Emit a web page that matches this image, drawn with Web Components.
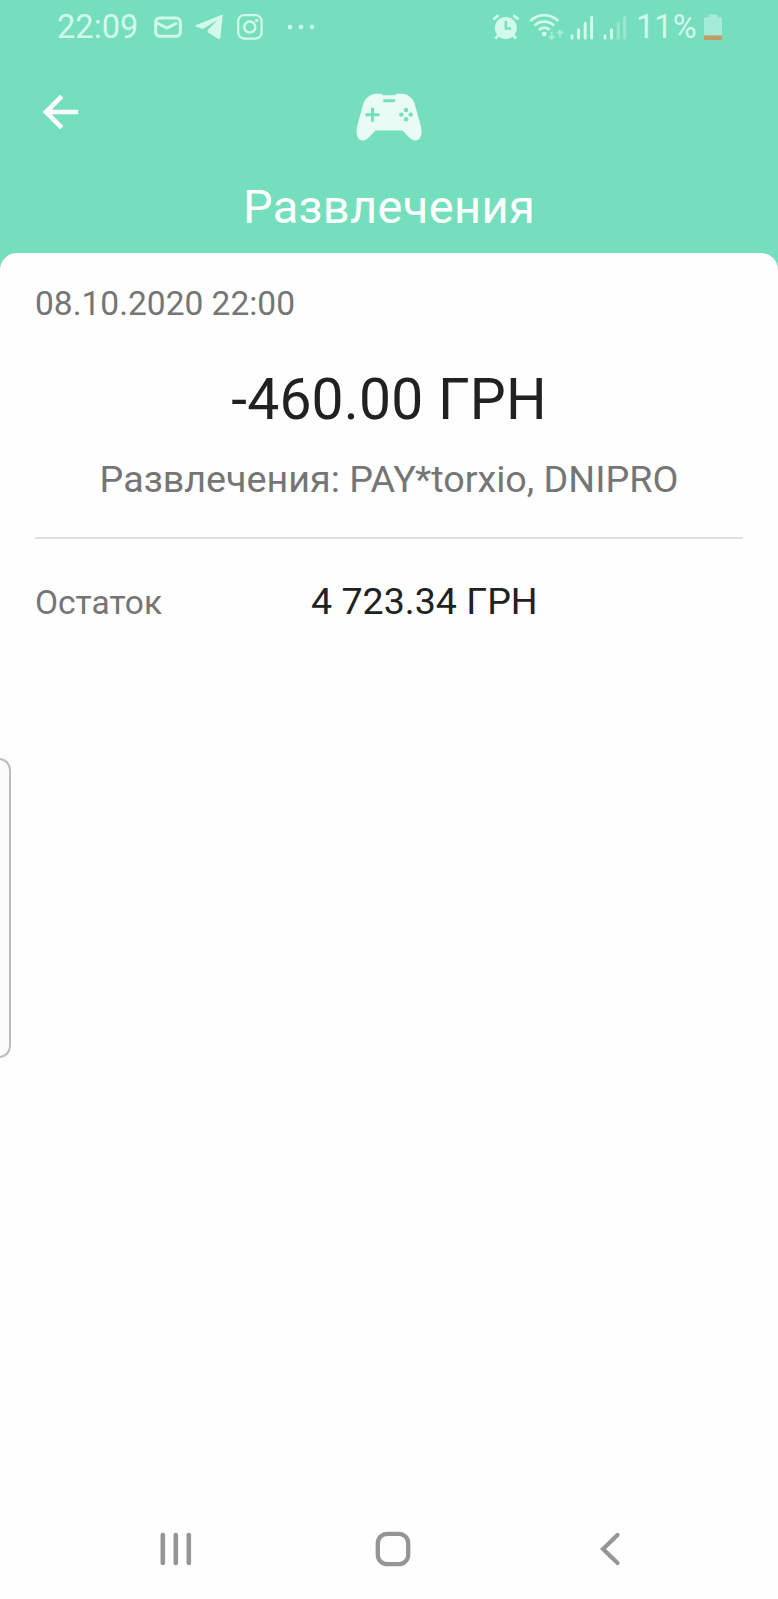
<!DOCTYPE html>
<html lang="ru">
<head>
<meta charset="utf-8">
<title>Развлечения</title>
<style>
  html, body {
    margin: 0;
    height: 100%;
  }

  body {
    font-family: Roboto, "Noto Sans", sans-serif;
    background: #fefefe;
    overflow: hidden;
  }
</style>
</head>
<body>
<app-screen>
  <status-bar slot="top" time="22:09" battery="11%"></status-bar>
  <category-header slot="top">Развлечения</category-header>
  <transaction-card>
    <span slot="date">08.10.2020 22:00</span>
    <span slot="amount">-460.00 ГРН</span>
    <span slot="details">Развлечения: PAY*torxio, DNIPRO</span>
    <detail-row label="Остаток">4 723.34 ГРН</detail-row>
  </transaction-card>
  <edge-handle slot="overlay"></edge-handle>
  <nav-bar slot="bottom"></nav-bar>
</app-screen>

<script>
// Icon table: [viewBox, markup]
const ICONS = {
  mail: ["0 0 28 26", `
    <rect x="1.7" y="3.9" width="24.6" height="18.4" rx="4" fill="none" stroke="currentColor" stroke-width="3"/>
    <path d="M2 8.5 L13 14 L23 9" fill="none" stroke="currentColor" stroke-width="3"/>`],
  telegram: ["0 0 28 26", `
    <path d="M27.7 1.2 Q28 .5 27 .8 L1.2 11 Q-.3 12 1.3 12.8 L8 14.9 L22.5 6 L12.5 16.2 L13 18.6 L23.3 25 Q25 25.7 25.4 23.8Z" fill="currentColor"/>`],
  instagram: ["0 0 26 26", `
    <rect x="1.2" y="1.2" width="23.4" height="23.4" rx="6" fill="none" stroke="currentColor" stroke-width="2.2"/>
    <circle cx="12.8" cy="13" r="5.6" fill="none" stroke="currentColor" stroke-width="2.5"/>
    <circle cx="19.8" cy="6.4" r="1.7" fill="currentColor"/>`],
  dots: ["0 0 28 26", `
    <g fill="currentColor"><circle cx="3" cy="13" r="2.3"/><circle cx="14" cy="13" r="2.3"/><circle cx="25" cy="13" r="2.3"/></g>`],
  alarm: ["0 0 28 26", `
    <circle cx="13.8" cy="14" r="11" fill="currentColor"/>
    <path d="M1.3 5.5 L6.3 1.2 M26.5 5.5 L21.5 1.2 M6.5 21 L3.5 24.7 M21 21 L24 24.7" stroke="currentColor" stroke-width="2.7"/>
    <path d="M13.8 7 V14.5 H19" fill="none" stroke="#75dfbd" stroke-width="2.4"/>`],
  wifi: ["0 0 36 26", `
    <g fill="none" stroke="currentColor" stroke-width="2.6">
      <path d="M1.2 7.2 C8.5 -.8 22 -.8 29.3 7.2"/>
      <path d="M5.5 11.6 C10.5 6.3 20 6.3 25 11.6"/>
      <path d="M9.8 16 C12.8 12.8 17.7 12.8 20.7 16"/>
    </g>
    <circle cx="15.2" cy="20" r="2.4" fill="currentColor"/>
    <path d="M22.8 17.5 V25 M19.9 22 L22.8 25 L25.7 22 M31 23.5 V16.5 M28.1 19.5 L31 16.5 L33.9 19.5" fill="none" stroke="currentColor" stroke-width="1.9" opacity=".5"/>`],
  signal: ["0 0 24 26", `
    <path d="M2 21.8 V24 M8.5 15.7 V24 M15.2 9.3 V24 M21.6 3.3 V24" stroke="currentColor" stroke-width="3" stroke-linecap="round"/>`],
  signalWeak: ["0 0 24 26", `
    <g stroke="currentColor" stroke-width="3" stroke-linecap="round">
      <path d="M2 21.8 V24 M8.5 15.7 V24"/>
      <path d="M15.2 9.3 V24 M21.6 3.3 V24" opacity=".4"/>
    </g>`],
  battery: ["0 0 18 26", `
    <path d="M0 4.5 Q0 3.3 1.2 3.3 H4.5 V2 Q4.5 .5 6 .5 H12 Q13.5 .5 13.5 2 V3.3 H16.8 Q18 3.3 18 4.5 V21.5 H0Z" fill="#a5ecd6"/>
    <path d="M0 21.5 H18 V24.6 Q18 26 16.6 26 H1.4 Q0 26 0 24.6Z" fill="#c49a6c"/>`],
  back: ["0 0 36 36", `
    <path d="M35 18 H4 M18.7 2.3 L3 18 L18.7 33.7" fill="none" stroke="currentColor" stroke-width="4.6"/>`],
  gamepad: ["0 0 66 48", `
    <path d="M14 2.6 Q16.5 .8 20 .8 H24 Q26 .8 27 2.2 H39 Q40 .8 42 .8 H46 Q50 .8 52 2.6 L55 4.8 Q57.5 7 58.6 10.5 L64.8 33 Q66.5 41 64 45 Q62.3 47.6 58.8 47.5 Q56 47.4 54 45.3 L46.5 37.5 H19.5 L12 45.3 Q10 47.4 7.2 47.5 Q3.7 47.6 2 45 Q-.5 41 1.2 33 L7.4 10.5 Q8.5 7 11 4.8Z" fill="currentColor"/>
    <path d="M9.5 21.8 H23.5 M16.5 14.8 V28.8 M27.3 7.8 H39" fill="none" stroke="#75dfbd" stroke-width="3"/>
    <g fill="#75dfbd"><circle cx="50" cy="17" r="2.2"/><circle cx="50" cy="26.2" r="2.2"/><circle cx="45.3" cy="21.6" r="2.2"/><circle cx="54.7" cy="21.6" r="2.2"/></g>`],
  recents: ["0 0 36 36", `
    <path d="M4.8 4 V32 M17.8 4 V32 M30.8 4 V32" stroke="currentColor" stroke-width="4.6" stroke-linecap="round"/>`],
  home: ["0 0 36 36", `
    <rect x="2.8" y="2.8" width="30.4" height="30.4" rx="9.5" fill="none" stroke="currentColor" stroke-width="4.3"/>`],
  chevron: ["0 0 36 36", `
    <path d="M24.5 4 L10 18 L24.5 32" fill="none" stroke="currentColor" stroke-width="4.2" stroke-linecap="round"/>`]
};

// <ui-icon name="mail"></ui-icon>, sized from the icon's viewBox
class UiIcon extends HTMLElement {
  connectedCallback() {
    const [box, markup] = ICONS[this.getAttribute("name")];
    const [, , width, height] = box.split(" ");
    const root = this.shadowRoot || this.attachShadow({ mode: "open" });
    root.innerHTML = `
      <style>
        :host { display: block; flex: none; }
        svg { display: block; }
      </style>
      <svg width="${width}" height="${height}" viewBox="${box}">${markup}</svg>
    `;
  }
}

class AppScreen extends HTMLElement {
  constructor() {
    super();
    this.attachShadow({ mode: "open" }).innerHTML = `
      <style>
        :host {
          display: flex;
          flex-direction: column;
          position: relative;
          height: 1599px;
          overflow: hidden;
        }

        .top {
          background: #75dfbd;
          padding-bottom: 20px;
          margin-bottom: -20px;
        }

        main {
          flex: 1;
          display: flex;
          flex-direction: column;
        }
      </style>
      <div class="top"><slot name="top"></slot></div>
      <main><slot></slot></main>
      <slot name="bottom"></slot>
      <slot name="overlay"></slot>
    `;
  }
}

class StatusBar extends HTMLElement {
  connectedCallback() {
    const root = this.shadowRoot || this.attachShadow({ mode: "open" });
    root.innerHTML = `
      <style>
        :host {
          display: flex;
          justify-content: space-between;
          height: 54px;
          padding: 0 56px 0 57px;
          color: #d3f8ec;
          font-size: 32.7px;
          line-height: 55px;
        }

        .group { display: flex; align-items: center; }
        .notices { gap: 13.5px; }
        .time { width: 83px; }
        .dots { margin-left: 11px; }
        .system { gap: 9px; }
        .battery { width: 60px; margin: 0 -1px 0 0; }
      </style>
      <div class="group notices">
        <span class="time">${this.getAttribute("time")}</span>
        <ui-icon name="mail"></ui-icon>
        <ui-icon name="telegram"></ui-icon>
        <ui-icon name="instagram"></ui-icon>
        <ui-icon class="dots" name="dots"></ui-icon>
      </div>
      <div class="group system">
        <ui-icon name="alarm"></ui-icon>
        <ui-icon name="wifi" style="margin-right: -4px"></ui-icon>
        <ui-icon name="signal"></ui-icon>
        <ui-icon name="signalWeak"></ui-icon>
        <span class="battery">${this.getAttribute("battery")}</span>
        <ui-icon name="battery"></ui-icon>
      </div>
    `;
  }
}

class CategoryHeader extends HTMLElement {
  constructor() {
    super();
    this.attachShadow({ mode: "open" }).innerHTML = `
      <style>
        :host {
          display: block;
          height: 199px;
          box-sizing: border-box;
          padding: 38px 43px 0;
          color: #fff;
        }

        .tools {
          display: grid;
          grid-template-columns: 1fr auto 1fr;
          align-items: start;
          height: 84px;
        }

        .back { margin-top: 2px; }
        .pad { margin-top: 0.7px; color: #e9fbf5; }

        h1 {
          margin: 0;
          font-size: 47px;
          font-weight: 400;
          line-height: 62px;
          letter-spacing: 0.35px;
          text-align: center;
        }
      </style>
      <div class="tools">
        <ui-icon class="back" name="back"></ui-icon>
        <ui-icon class="pad" name="gamepad"></ui-icon>
      </div>
      <h1><slot></slot></h1>
    `;
  }
}

class TransactionCard extends HTMLElement {
  constructor() {
    super();
    this.attachShadow({ mode: "open" }).innerHTML = `
      <style>
        :host {
          display: block;
          flex: 1;
          padding: 26px 35px 0;
          background: #fefefe;
          border-radius: 17px 17px 0 0;
          color: #757575;
        }

        .date {
          font-size: 33.5px;
          line-height: 50px;
        }

        .amount {
          margin-top: 36px;
          font-size: 57px;
          line-height: 70px;
          letter-spacing: 0.2px;
          text-align: center;
          color: #212121;
        }

        .details {
          padding: 18px 0 32px;
          font-size: 37.7px;
          line-height: 52px;
          text-align: center;
          border-bottom: 2px solid #e0e0e0;
        }
      </style>
      <div class="date"><slot name="date"></slot></div>
      <div class="amount"><slot name="amount"></slot></div>
      <div class="details"><slot name="details"></slot></div>
      <slot></slot>
    `;
  }
}

class DetailRow extends HTMLElement {
  connectedCallback() {
    const root = this.shadowRoot || this.attachShadow({ mode: "open" });
    root.innerHTML = `
      <style>
        :host {
          display: grid;
          grid-template-columns: 276px 1fr;
          align-items: baseline;
          margin-top: 36px;
          font-size: 33.5px;
          line-height: 52px;
        }

        .value {
          font-size: 37.6px;
          color: #212121;
        }
      </style>
      <span>${this.getAttribute("label")}</span>
      <span class="value"><slot></slot></span>
    `;
  }
}

// Edge panel handle, floats over the left side of the screen
class EdgeHandle extends HTMLElement {
  constructor() {
    super();
    this.attachShadow({ mode: "open" }).innerHTML = `
      <style>
        :host {
          position: absolute;
          left: -20px;
          top: 758px;
          width: 31px;
          height: 300px;
          box-sizing: border-box;
          border: 2px solid #bcbcbc;
          border-radius: 12px;
          background: #fbfbfb;
        }
      </style>
    `;
  }
}

class NavBar extends HTMLElement {
  constructor() {
    super();
    this.attachShadow({ mode: "open" }).innerHTML = `
      <style>
        :host {
          display: flex;
          justify-content: space-between;
          height: 68px;
          padding: 0 149px 0 157.5px;
          background: #fefefe;
          color: #959595;
        }
      </style>
      <ui-icon name="recents"></ui-icon>
      <ui-icon name="home"></ui-icon>
      <ui-icon name="chevron"></ui-icon>
    `;
  }
}

customElements.define("ui-icon", UiIcon);
customElements.define("app-screen", AppScreen);
customElements.define("status-bar", StatusBar);
customElements.define("category-header", CategoryHeader);
customElements.define("transaction-card", TransactionCard);
customElements.define("detail-row", DetailRow);
customElements.define("edge-handle", EdgeHandle);
customElements.define("nav-bar", NavBar);
</script>
</body>
</html>
